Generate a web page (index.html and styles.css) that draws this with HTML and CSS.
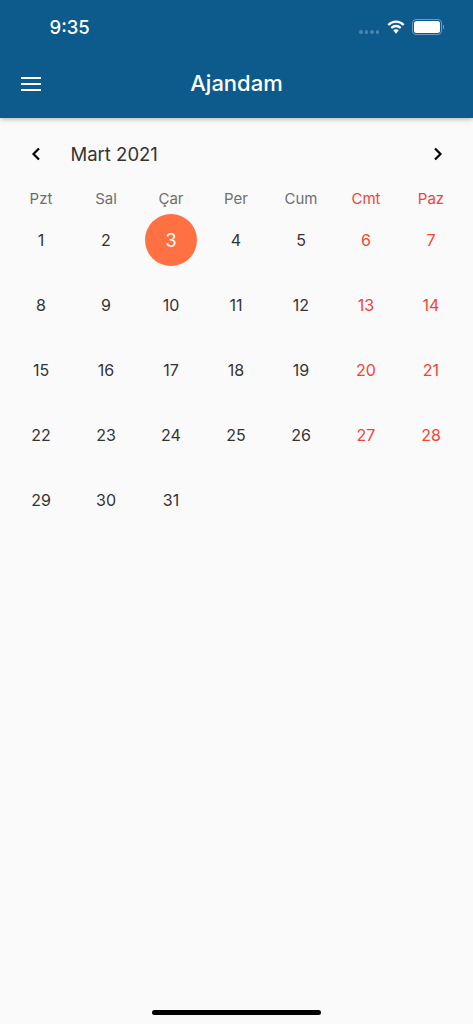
FILE: index.html
```html
<!DOCTYPE html>
<html lang="tr">
<head>
    <meta charset="UTF-8">
    <meta name="viewport" content="width=device-width, initial-scale=1.0">
    <title>Ajandam</title>
    <link rel="stylesheet" href="styles.css">
</head>
<body>
    <div class="phone">
        <header class="appbar">
            <div class="status">
                <div class="time">9:35</div>
                <div class="status-icons">
                    <div class="signal"><span></span><span></span><span></span><span></span></div>
                    <svg class="wifi" width="18" height="14" viewBox="0 0 18 14">
                        <path d="M1.300 5C3.300 3 6 1.700 9 1.700S14.700 3 16.700 5" fill="none" stroke="#fff" stroke-width="2.300"/>
                        <path d="M4.300 8C5.500 6.800 7.100 6 9 6s3.500.8 4.700 2" fill="none" stroke="#fff" stroke-width="2.300"/>
                        <path d="M6.200 10.300C7 9.600 8 9.200 9 9.200s2 .4 2.800 1.100L9 13.800z" fill="#fff"/>
                    </svg>
                    <div class="battery"><div class="battery-level"></div></div>
                    <div class="battery-cap"></div>
                </div>
            </div>
            <div class="toolbar">
                <div class="menu"><span></span><span></span><span></span></div>
                <div class="title">Ajandam</div>
            </div>
        </header>

        <main class="calendar">
            <div class="month-row">
                <svg class="arrow" width="12" height="14" viewBox="0 0 12 14"><path d="M9 1.500L3.500 7 9 12.500" fill="none" stroke="#000" stroke-width="2.200"/></svg>
                <div class="month">Mart 2021</div>
                <svg class="arrow next" width="12" height="14" viewBox="0 0 12 14"><path d="M3 1.500L8.500 7 3 12.500" fill="none" stroke="#000" stroke-width="2.200"/></svg>
            </div>

            <div class="weekdays">
                <div>Pzt</div>
                <div>Sal</div>
                <div>Çar</div>
                <div>Per</div>
                <div>Cum</div>
                <div class="weekend">Cmt</div>
                <div class="weekend">Paz</div>
            </div>

            <div class="days">
                <div>1</div>
                <div>2</div>
                <div><span class="today">3</span></div>
                <div>4</div>
                <div>5</div>
                <div class="weekend">6</div>
                <div class="weekend">7</div>
                <div>8</div>
                <div>9</div>
                <div>10</div>
                <div>11</div>
                <div>12</div>
                <div class="weekend">13</div>
                <div class="weekend">14</div>
                <div>15</div>
                <div>16</div>
                <div>17</div>
                <div>18</div>
                <div>19</div>
                <div class="weekend">20</div>
                <div class="weekend">21</div>
                <div>22</div>
                <div>23</div>
                <div>24</div>
                <div>25</div>
                <div>26</div>
                <div class="weekend">27</div>
                <div class="weekend">28</div>
                <div>29</div>
                <div>30</div>
                <div>31</div>
            </div>
        </main>

        <div class="home-bar"></div>
    </div>
</body>
</html>
```

FILE: styles.css
```css
html, body {
    margin: 0;
    padding: 0;
}

body {
    background-color: #FAFAFA;
    font-family: "Inter", "Roboto", sans-serif;
}

.phone {
    height: 1024px;
    width: 473px;
    display: flex;
    flex-direction: column;
    overflow: hidden;
}

.appbar {
    height: 118px;
    background-color: #0D5A8C;
    box-shadow: 0 1px 5px rgba(0, 0, 0, 0.3);
    color: #fff;
}

.status {
    height: 54px;
    display: flex;
    justify-content: space-between;
    align-items: center;
    padding: 0 29px 0 49.500px;
}

.time {
    font-size: 18.500px;
    font-weight: 500;
}

.status-icons {
    display: flex;
    align-items: center;
}

.signal {
    display: flex;
    gap: 2px;
    margin: 10px 8px 0 0;
}

.signal span {
    width: 3.500px;
    height: 3.500px;
    border-radius: 50%;
    background-color: #4A84AB;
}

.wifi {
    margin-right: 7px;
}

.battery {
    width: 26px;
    height: 12px;
    border: solid 1px #6E9BBA;
    border-radius: 4px;
    padding: 1px;
}

.battery-level {
    height: 100%;
    background-color: #fff;
    border-radius: 2.500px;
}

.battery-cap {
    width: 1px;
    height: 4px;
    margin-left: 1px;
    background-color: #6E9BBA;
}

.toolbar {
    height: 58px;
    display: flex;
    align-items: center;
    justify-content: center;
    position: relative;
}

.menu {
    position: absolute;
    left: 21px;
    top: 22.500px;
    width: 20px;
    display: flex;
    flex-direction: column;
    gap: 4px;
}

.menu span {
    height: 2px;
    background-color: #fff;
}

.title {
    font-size: 22px;
    font-weight: 500;
}

.calendar {
    padding: 18px 8.500px 0;
}

.month-row {
    height: 36px;
    display: flex;
    align-items: center;
    padding: 0 21px;
}

.month {
    margin-left: 29px;
    font-size: 18.500px;
    color: #333;
}

.arrow.next {
    margin-left: auto;
}

.weekdays {
    display: grid;
    grid-template-columns: repeat(7, 65px);
    height: 19px;
    align-items: center;
    margin-top: 16.500px;
    text-align: center;
    font-size: 15px;
    color: #6E6E6E;
}

.days {
    display: grid;
    grid-template-columns: repeat(7, 65px);
    grid-auto-rows: 65px;
    text-align: center;
    font-size: 16px;
    color: #333;
}

.days div {
    display: flex;
    justify-content: center;
    align-items: center;
}

.weekdays .weekend,
.days .weekend {
    color: #F44336;
}

.today {
    width: 52.500px;
    height: 52.500px;
    border-radius: 50%;
    background-color: #FF7043;
    color: #fff;
    font-size: 18px;
    display: flex;
    justify-content: center;
    align-items: center;
}

.home-bar {
    width: 169px;
    height: 5px;
    margin: auto auto 9px;
    border-radius: 3px;
    background-color: #000;
}
```
